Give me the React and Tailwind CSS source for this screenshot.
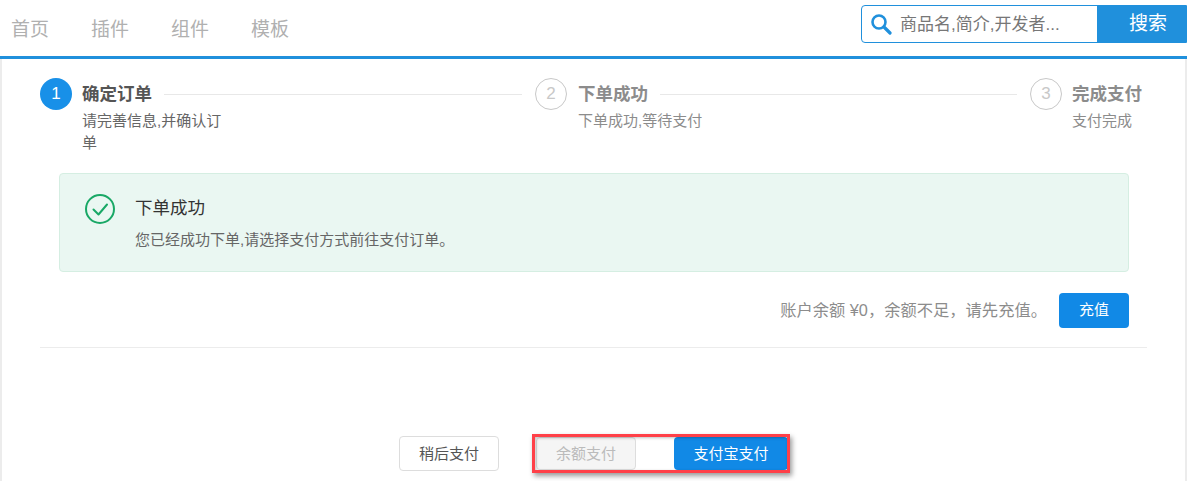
import React from 'react';

const NavLink = ({ children }) => (
    <a className="text-[19px] leading-[28px] text-[#b0b0b0] w-[80px]">{children}</a>
);

const Circle = ({ num, active }) => (
    <div className={`w-[32px] h-[32px] rounded-full flex items-center justify-center text-[17px] shrink-0 ${active ? 'bg-[#1890e8] text-white' : 'border border-[#c8c8c8] text-[#c8c8c8]'}`}>
        {num}
    </div>
);

const Step = ({ num, title, desc, active, width, last }) => (
    <div className={`flex shrink-0 ${width}`}>
        <Circle num={num} active={active} />
        <div className={`flex-1 min-w-0 ${active || last ? 'ml-[10px]' : 'ml-[11px]'}`}>
            <div className="flex items-center h-[32px]">
                <span className={`text-[17.5px] font-bold whitespace-nowrap ${active ? 'text-[#555]' : 'text-[#8c8c8c]'}`}>{title}</span>
                {!last && <div className="flex-1 h-px bg-[#e8e8e8] ml-[12px] mr-[13px]" />}
            </div>
            <div className={`text-[15px] leading-[22px] max-w-[140px] ${active ? 'text-[#666]' : 'text-[#8c8c8c]'}`}>{desc}</div>
        </div>
    </div>
);

export default function App() {
    return (
        <div className="w-[1187px] h-[481px] overflow-hidden bg-white text-[#666] font-['Liberation_Sans','Noto_Sans_CJK_SC',sans-serif]">
            {/* top bar */}
            <header className="h-[59px] border-b-[3px] border-[#2090dc] flex items-start justify-between pl-[11px]">
                <nav className="flex pt-[16px]">
                    <NavLink>首页</NavLink>
                    <NavLink>插件</NavLink>
                    <NavLink>组件</NavLink>
                    <NavLink>模板</NavLink>
                </nav>
                <div className="flex mt-[5px] h-[38px] w-[326px] border border-[#2090dc] rounded-l-[4px]">
                    <div className="flex-1 flex items-center pl-[8px] pb-[1px]">
                        <svg width="22" height="22" viewBox="0 0 22 22" fill="none" stroke="#2090dc">
                            <circle cx="9" cy="9" r="6.5" strokeWidth="2.6" />
                            <path d="M14 14l6 6" strokeWidth="3.2" strokeLinecap="round" />
                        </svg>
                        <span className="ml-[8px] text-[17px] leading-[24px] mt-[2px] text-[#777]">商品名,简介,开发者...</span>
                    </div>
                    <button className="w-[89px] -my-px bg-[#2090dc] text-white text-[19px] pl-[13px]">搜索</button>
                </div>
            </header>

            {/* page body */}
            <main className="relative h-[422px] border-x-2 border-[#ececec] px-[38px] pt-[19px]">
                {/* steps */}
                <div className="flex items-start h-[76px]">
                    <Step num="1" title="确定订单" desc="请完善信息,并确认订单" active width="w-[495px]" />
                    <Step num="2" title="下单成功" desc="下单成功,等待支付" width="w-[495px]" />
                    <Step num="3" title="完成支付" desc="支付完成" last width="w-[115px]" />
                </div>

                {/* success alert */}
                <div className="ml-[19px] mt-[19px] w-[1070px] h-[99px] bg-[#eaf7f2] border border-[#d5eee2] rounded-[4px] flex pl-[25px] pt-[20px]">
                    <svg width="30" height="30" viewBox="0 0 30 30" fill="none" stroke="#19a866" strokeWidth="2" className="shrink-0">
                        <circle cx="15" cy="15" r="14" />
                        <path d="M8.5 15.5l5 5 8.5-10" strokeLinecap="round" strokeLinejoin="round" />
                    </svg>
                    <div className="ml-[20px] pt-px">
                        <div className="text-[17.5px] leading-[26px] text-[#333]">下单成功</div>
                        <div className="text-[15px] leading-[20px] text-[#666] mt-[9px]">您已经成功下单,请选择支付方式前往支付订单。</div>
                    </div>
                </div>

                {/* balance */}
                <div className="ml-[19px] w-[1070px] mt-[21px] flex items-center justify-end">
                    <span className="text-[16.3px] text-[#8c8c8c]">账户余额 ¥0，余额不足，请先充值。</span>
                    <button className="ml-[12px] w-[70px] h-[35px] rounded-[4px] bg-[#1189e6] text-white text-[15px]">充值</button>
                </div>

                <div className="h-px bg-[#ececec] mt-[19px]" />

                {/* actions */}
                <div className="flex mt-[88px] ml-[359px]">
                    <button className="w-[100px] h-[35px] pt-px border border-[#ddd] rounded-[4px] bg-white text-[15px] text-[#555]">稍后支付</button>
                    <button className="ml-[37px] mt-[1px] w-[100px] h-[33px] pt-px border border-[#ddd] rounded-[4px] bg-[#f5f5f5] text-[15px] text-[#bbb]">余额支付</button>
                    <button className="ml-[38px] mt-[1px] w-[114px] h-[33px] pt-px rounded-[4px] bg-[#1189e6] text-[15px] text-white">支付宝支付</button>
                </div>

                {/* red annotation box */}
                <div className="absolute left-[530px] top-[375px] w-[258px] h-[39px] border-[3px] border-[#ff4048] shadow-[2px_3px_5px_rgba(0,0,0,0.4),inset_1px_1px_3px_rgba(0,0,0,0.25)]" />
            </main>
        </div>
    );
}
